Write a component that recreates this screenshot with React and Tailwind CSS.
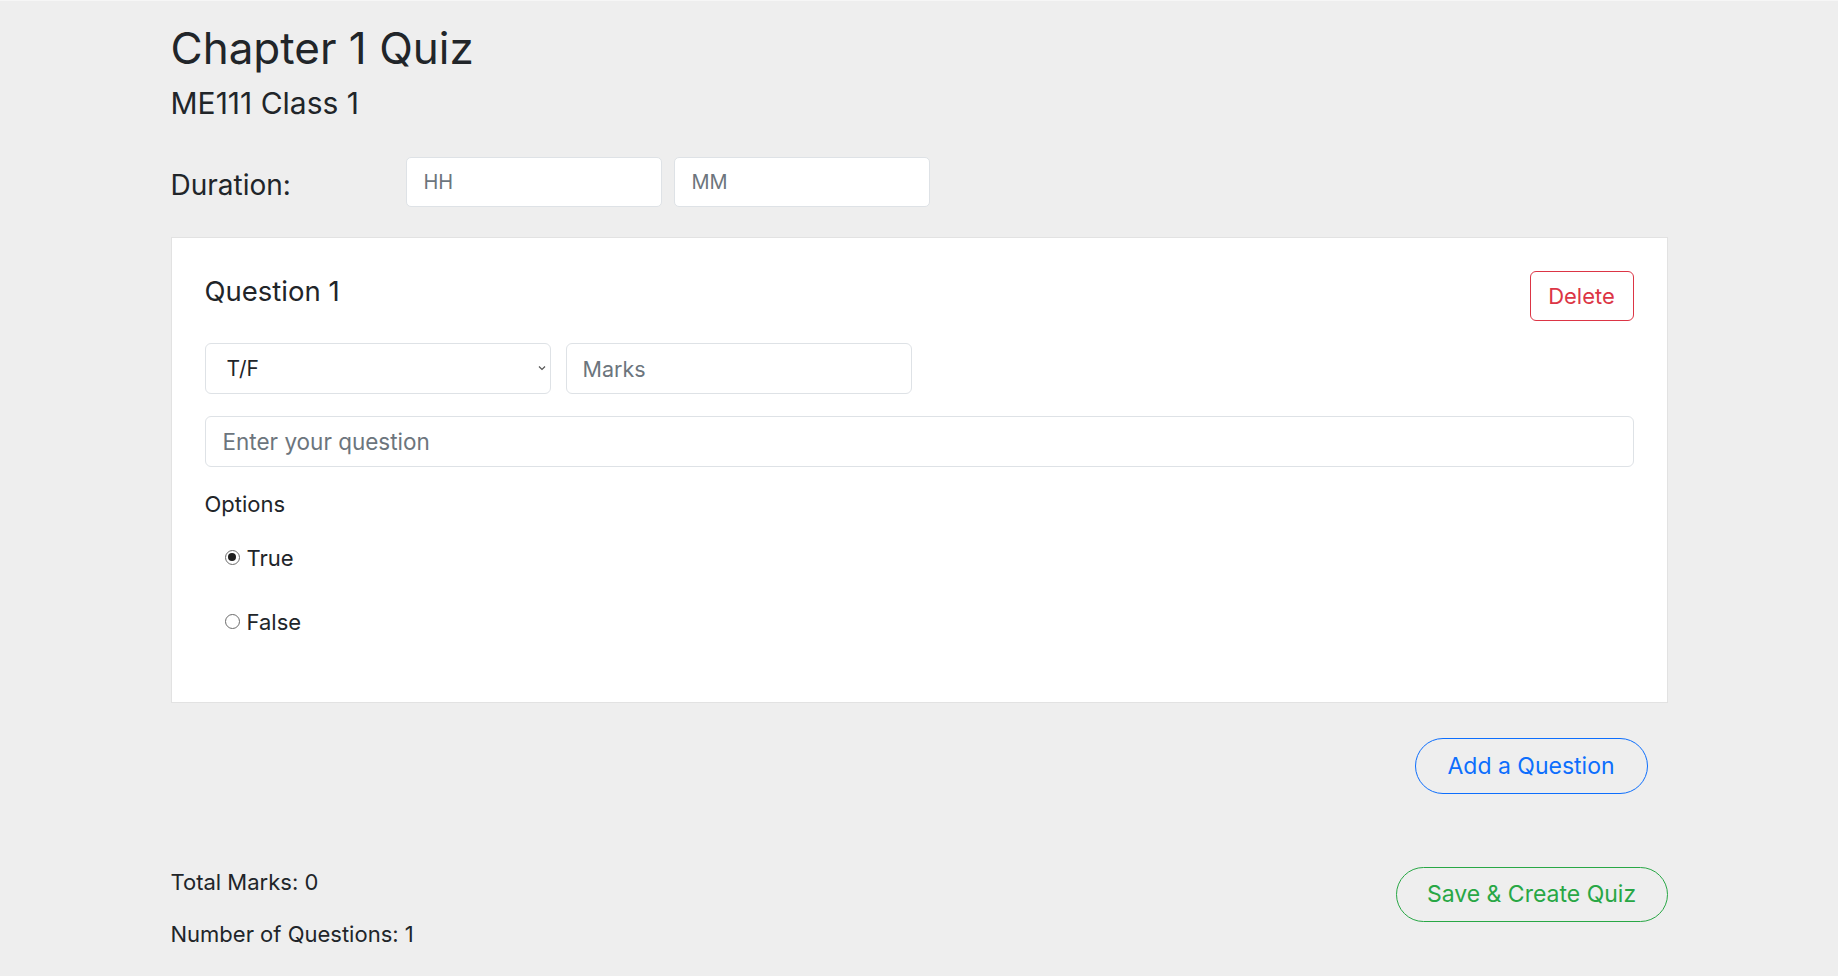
import React from "react";

function Radio({ checked, label }) {
  return (
    <div className="flex items-center h-[30px]">
      <span className="ml-[20px] -mt-[2px] w-[15px] h-[15px] rounded-full border border-[#6b6b6b] bg-white flex items-center justify-center">
        {checked ? <span className="w-[8px] h-[8px] rounded-full bg-[#1e1e1e]" /> : null}
      </span>
      <span className="ml-[7px] text-[22px] leading-[30px]">{label}</span>
    </div>
  );
}

export default function App() {
  return (
    <div className="min-h-screen bg-[#eeeeee] text-[#212529] [font-family:Inter,'Noto_Sans',sans-serif] border-t border-[#f6f6f6]">
      <div className="w-[1497px] mx-auto pt-[21px] pb-[40px]">
        <h1 className="text-[44px] leading-[53px] font-normal">Chapter 1 Quiz</h1>
        <h2 className="mt-[11px] text-[30px] leading-[35px] font-normal">ME111 Class 1</h2>

        <div className="mt-[36px] flex items-start">
          <label className="w-[235px] h-[50px] text-[28px] leading-[56px]">Duration:</label>
          <input
            placeholder="HH"
            className="w-[256px] h-[50px] bg-white border border-[#dee2e6] rounded-[5px] px-[17px] text-[20px] placeholder:text-[#6c757d] outline-none"
          />
          <input
            placeholder="MM"
            className="ml-[12px] w-[256px] h-[50px] bg-white border border-[#dee2e6] rounded-[5px] px-[17px] text-[20px] placeholder:text-[#6c757d] outline-none"
          />
        </div>

        <div className="mt-[30px] bg-white border border-[#e2e2e2] px-[33px] pt-[33px] pb-[65px]">
          <div className="flex justify-between items-start">
            <h3 className="text-[27.5px] leading-[40px] font-normal">Question 1</h3>
            <button className="w-[104px] h-[50px] border border-[#dc3545] text-[#dc3545] rounded-[6px] text-[22px] bg-white">
              Delete
            </button>
          </div>

          <div className="mt-[22px] flex">
            <div className="relative w-[346px] h-[51px]">
              <select
                defaultValue="tf"
                className="w-full h-full appearance-none bg-white border border-[#dee2e6] rounded-[6px] pl-[21px] text-[21px] text-[#212529] outline-none"
              >
                <option value="tf">T/F</option>
                <option value="mcq">MCQ</option>
              </select>
              <svg
                className="absolute right-[5px] top-[22px] pointer-events-none"
                width="8"
                height="6"
                viewBox="0 0 8 6"
                fill="none"
              >
                <path d="M1 1.5 L4 4.5 L7 1.5" stroke="#555" strokeWidth="1.2" />
              </svg>
            </div>
            <input
              placeholder="Marks"
              className="ml-[15px] w-[346px] h-[51px] bg-white border border-[#dee2e6] rounded-[6px] px-[16px] text-[21.5px] placeholder:text-[#6c757d] outline-none"
            />
          </div>

          <input
            placeholder="Enter your question"
            className="mt-[22px] w-full h-[51px] bg-white border border-[#dee2e6] rounded-[6px] px-[17px] text-[22.5px] placeholder:text-[#6c757d] outline-none block"
          />

          <div className="mt-[22px] text-[22px] leading-[30px]">Options</div>

          <div className="mt-[24px]">
            <Radio checked label="True" />
          </div>
          <div className="mt-[34px]">
            <Radio label="False" />
          </div>
        </div>

        <div className="mt-[35px] flex justify-end pr-[20px]">
          <button className="w-[233px] h-[56px] rounded-full border border-[#0d6efd] text-[#0d6efd] text-[23px] bg-transparent">
            Add a Question
          </button>
        </div>

        <div className="mt-[73px] flex justify-between items-start">
          <div className="text-[22px] leading-[30px]">
            <p>Total Marks: 0</p>
            <p className="mt-[22px]">Number of Questions: 1</p>
          </div>
          <button className="w-[272px] h-[55px] rounded-full border border-[#28a745] text-[#28a745] text-[23px] bg-transparent">
            Save &amp; Create Quiz
          </button>
        </div>
      </div>
    </div>
  );
}
